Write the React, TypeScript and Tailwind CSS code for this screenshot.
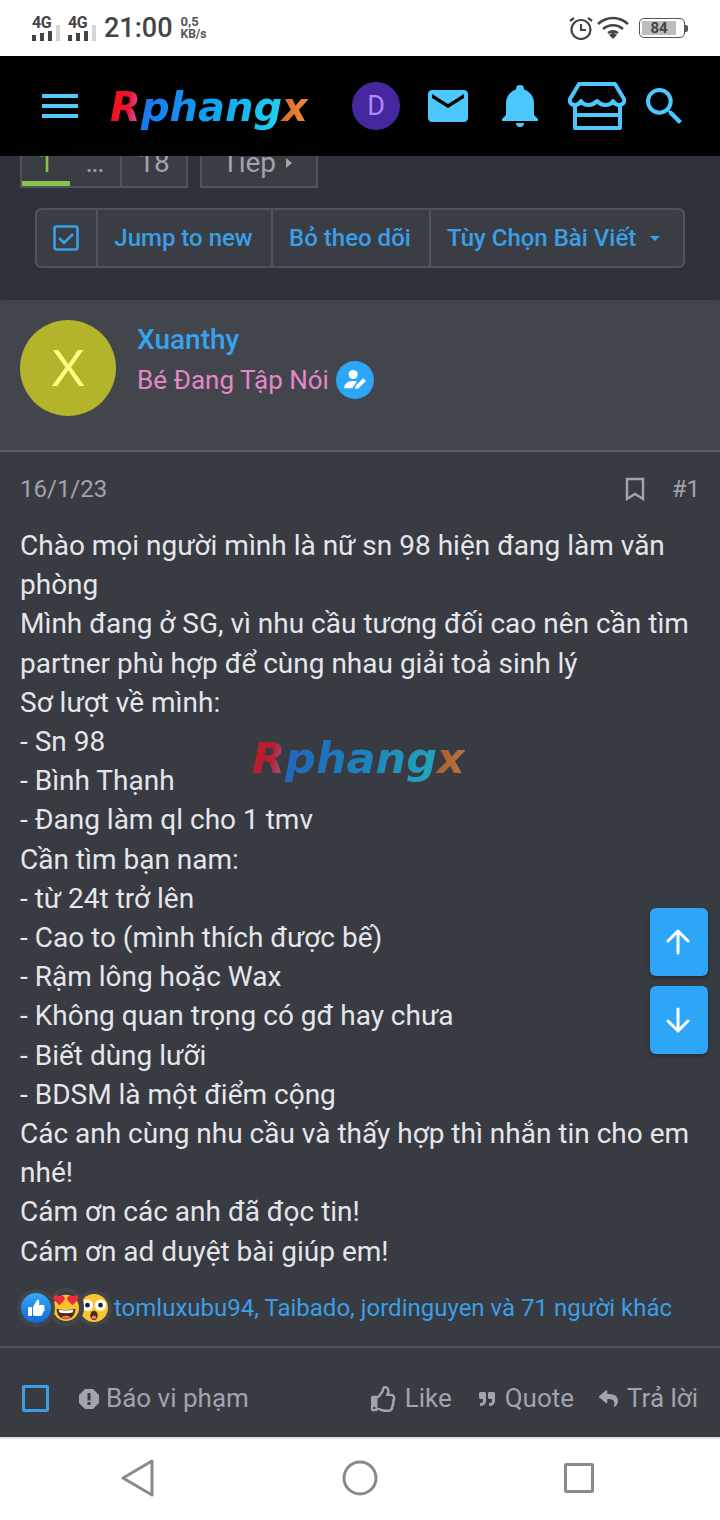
import { FaQuoteRight, FaReply, FaRegThumbsUp } from "react-icons/fa";

const lines = [
  "Chào mọi người mình là nữ sn 98 hiện đang làm văn",
  "phòng",
  "Mình đang ở SG, vì nhu cầu tương đối cao nên cần tìm",
  "partner phù hợp để cùng nhau giải toả sinh lý",
  "Sơ lượt về mình:",
  "- Sn 98",
  "- Bình Thạnh",
  "- Đang làm ql cho 1 tmv",
  "Cần tìm bạn nam:",
  "- từ 24t trở lên",
  "- Cao to (mình thích được bế)",
  "- Rậm lông hoặc Wax",
  "- Không quan trọng có gđ hay chưa",
  "- Biết dùng lưỡi",
  "- BDSM là một điểm cộng",
  "Các anh cùng nhu cầu và thấy hợp thì nhắn tin cho em",
  "nhé!",
  "Cám ơn các anh đã đọc tin!",
  "Cám ơn ad duyệt bài giúp em!",
];

function Signal() {
  return (
    <svg width="28" height="16" viewBox="0 0 28 16" className="block">
      <rect x="0" y="10" width="4" height="6" fill="#444" />
      <rect x="8" y="8" width="4" height="8" fill="#444" />
      <rect x="16" y="6" width="4" height="10" fill="#444" />
      <rect x="24" y="0" width="4" height="16" fill="#d6d6d6" />
    </svg>
  );
}

function Net() {
  return (
    <div className="flex flex-col items-start w-[28px] mt-[-1px]">
      <span className="text-[16px] leading-[16px] font-bold text-[#444] tracking-[-0.5px]">4G</span>
      <div className="mt-[-6px]"><Signal /></div>
    </div>
  );
}

function Logo({ className }: { className: string }) {
  return (
    <span
      className={
        "inline-block font-['DejaVu_Sans',sans-serif] font-bold italic bg-[linear-gradient(100deg,#f0101c_0%,#f0142a_11%,#d050a0_16%,#1a78f0_18%,#10a0f0_50%,#20d0f0_85%,#e0702a_87%,#f09040_100%)] bg-clip-text text-transparent " +
        className
      }
    >
      Rphangx
    </span>
  );
}

function StoreIcon() {
  return (
    <svg width="58" height="48" viewBox="0 0 58 48" fill="none" stroke="#4cc8ff" strokeWidth="4" strokeLinejoin="round" className="block">
      <path d="M11 2h36l9 15c1 4-2 6-5 6-3 0-5-2-6-4-1 2-4 4-8 4s-6-2-8-4c-2 2-4 4-8 4s-7-2-8-4c-1 2-3 4-6 4-3 0-6-2-5-6z" />
      <path d="M7 23v23h45V23M7 33h45" />
    </svg>
  );
}

function ReactLike() {
  return (
    <svg width="30" height="30" viewBox="0 0 30 30" className="block">
      <defs>
        <linearGradient id="lk" x1="0" y1="0" x2="0" y2="1">
          <stop offset="0" stopColor="#35a8f8" />
          <stop offset="1" stopColor="#1268d8" />
        </linearGradient>
      </defs>
      <circle cx="15" cy="15" r="15" fill="url(#lk)" />
      <rect x="7" y="14" width="4" height="9" rx="1" fill="#fff" />
      <path d="M12 14l4-7c2-1 3 1 2 5h4c2 0 2 2 1 3 1 1 1 3-1 4 0 2-1 3-2 4h-6c-1 0-2-1-2-1z" fill="#fff" />
    </svg>
  );
}

function ReactLove() {
  return (
    <svg width="28" height="30" viewBox="0 0 30 32" className="block">
      <circle cx="15" cy="17" r="14" fill="#fbc02d" />
      <path d="M5 18c6 2 14 2 20 0 0 7-4 11-10 11S5 25 5 18z" fill="#4a2a12" />
      <path d="M7 19c5 1 11 1 16 0l-1 3c-4 1-10 1-14 0z" fill="#fff" />
      <path d="M10 27c3-2 7-2 10 0-3 2-7 2-10 0z" fill="#f06a80" />
      <path d="M8 14L2 8c-2-3 2-7 6-3 4-3 7 1 5 4z" fill="#ee2b3a" />
      <path d="M22 14l6-6c2-3-2-7-6-3-4-3-7 1-5 4z" fill="#ee2b3a" />
    </svg>
  );
}

function ReactWow() {
  return (
    <svg width="28" height="28" viewBox="0 0 30 30" className="block">
      <circle cx="15" cy="15" r="15" fill="#fbc531" />
      <circle cx="8" cy="12" r="6" fill="#fff" />
      <circle cx="22" cy="12" r="6" fill="#fff" />
      <circle cx="8" cy="12" r="2.5" fill="#222" />
      <circle cx="22" cy="12" r="2.5" fill="#222" />
      <ellipse cx="15" cy="23" rx="4" ry="5" fill="#4a2a12" />
      <ellipse cx="15" cy="25" rx="2.5" ry="2" fill="#f06a80" />
    </svg>
  );
}

export default function App() {
  return (
    <div className="relative w-[720px] h-[1520px] overflow-hidden flex flex-col bg-[#383b42] font-['Roboto',sans-serif]">
      {/* status bar */}
      <div className="h-[56px] shrink-0 bg-white flex items-center pl-[32px] pr-[35px] text-[#444]">
        <Net />
        <div className="w-[8px]" />
        <Net />
        <span className="ml-[8px] text-[27px] font-medium leading-none">21:00</span>
        <div className="ml-[8px] flex flex-col text-[12px] leading-[13px] font-bold text-[#555]">
          <span className="text-[13px] leading-[12px]">0,5</span>
          <span>KB/s</span>
        </div>
        <div className="ml-auto flex items-center gap-[3px]">
          <svg width="24" height="24" viewBox="0 0 24 24" fill="none" stroke="#444" strokeWidth="2.2" className="block">
            <circle cx="12" cy="13.5" r="9.5" />
            <path d="M12 8v6h5" />
            <path d="M1 5l4-3M23 5l-4-3" />
          </svg>
          <svg width="34" height="24" viewBox="0 0 34 24" fill="none" stroke="#444" strokeWidth="2.6" className="block">
            <path d="M2 8c9-8 21-8 30 0M7 13c6-5 14-5 20 0M12 17c3-2 7-2 10 0" />
            <path d="M13 19l4-3 4 3-4 4z" fill="#444" stroke="none" />
          </svg>
          <div className="ml-[6px] relative w-[46px] h-[20px] border border-[#555] rounded-[5px] flex items-center pl-[2px]">
            <div className="w-[34px] h-[14px] bg-[#bdbdbd] flex items-center justify-center text-[15px] font-bold text-[#444]">84</div>
            <div className="absolute right-[-4px] top-[6px] w-[3px] h-[7px] bg-[#555] rounded-r-[2px]" />
          </div>
        </div>
      </div>

      {/* header */}
      <div className="relative z-10 h-[100px] shrink-0 bg-black flex items-center">
        <div className="ml-[42px] w-[36px] flex flex-col gap-[6px]">
          <div className="h-[4px] bg-[#54c8f6]" />
          <div className="h-[4px] bg-[#54c8f6]" />
          <div className="h-[4px] bg-[#54c8f6]" />
        </div>
        <div className="ml-[32px] w-[198px] flex justify-center mt-[2px]">
          <Logo className="text-[40px] leading-[50px]" />
        </div>
        <div className="ml-[44px] w-[48px] h-[48px] rounded-full bg-[#4527a0] text-[#b388ff] text-[27px] flex items-center justify-center">D</div>
        <svg width="40" height="32" viewBox="2 4 20 16" fill="#4cc8ff" className="block ml-[28px]">
          <path d="M20 4H4c-1.1 0-2 .9-2 2v12c0 1.1.9 2 2 2h16c1.1 0 2-.9 2-2V6c0-1.1-.9-2-2-2zm0 4l-8 5-8-5V6l8 5 8-5v2z" />
        </svg>
        <svg width="36" height="42" viewBox="3 2 18 21" fill="#4cc8ff" className="block ml-[34px]">
          <path d="M21,19V20H3V19L5,17V11C5,7.9 7.03,5.17 10,4.29C10,4.19 10,4.1 10,4A2,2 0 0,1 12,2A2,2 0 0,1 14,4C14,4.1 14,4.19 14,4.29C16.97,5.17 19,7.9 19,11V17L21,19M14,21A2,2 0 0,1 12,23A2,2 0 0,1 10,21" />
        </svg>
        <div className="ml-[30px]"><StoreIcon /></div>
        <svg width="36" height="36" viewBox="3 3 17.5 17.5" fill="#4cc8ff" className="block ml-[20px]">
          <path d="M9.5,3A6.5,6.5 0 0,1 16,9.5C16,11.11 15.41,12.59 14.44,13.73L14.71,14H15.5L20.5,19L19,20.5L14,15.5V14.71L13.73,14.44C12.59,15.41 11.11,16 9.5,16A6.5,6.5 0 0,1 3,9.5A6.5,6.5 0 0,1 9.5,3M9.5,5C7,5 5,7 5,9.5C5,12 7,14 9.5,14C12,14 14,12 14,9.5C14,7 12,5 9.5,5Z" />
        </svg>
      </div>

      {/* top zone */}
      <div className="h-[144px] shrink-0 bg-[#2f323a] overflow-hidden">
        <div className="flex gap-[12px] ml-[20px] mt-[-18px] h-[50px] text-[28px] leading-[45px] text-[#a0a4ad]">
          <div className="relative w-[168px] flex border-2 border-[#50535a] bg-[#3a3d44]">
            <div className="relative w-[98px] flex">
              <span className="w-[48px] text-center text-[#8bc34a]">1</span>
              <span className="w-[50px] text-center text-[20px] font-bold leading-[50px]">...</span>
              <div className="absolute left-0 bottom-0 w-[48px] h-[5px] bg-[#8bc34a]" />
            </div>
            <div className="flex-1 border-l-2 border-[#50535a] text-center">18</div>
          </div>
          <div className="w-[118px] border-2 border-[#50535a] bg-[#3a3d44] flex items-start pl-[20px]">
            <span>Tiếp</span>
            <span className="ml-[10px] mt-[18px] w-0 h-0 border-y-[5px] border-y-transparent border-l-[6px] border-l-[#a0a4ad]" />
          </div>
        </div>
        <div className="ml-[35px] mt-[20px] w-[650px] h-[60px] flex border-2 border-[#50535a] rounded-[6px] bg-[#3a3d44] text-[24px] font-medium text-[#3b9fe6]">
          <div className="w-[61px] flex items-center justify-center border-r-2 border-[#50535a] pr-[2px]">
            <svg width="26" height="26" viewBox="0 0 26 26" fill="none" stroke="#3b9fe6" strokeWidth="2.6" className="block">
              <rect x="1.5" y="1.5" width="23" height="23" rx="2" />
              <path d="M6 13l5 5 9-9" />
            </svg>
          </div>
          <div className="w-[175px] flex items-center justify-center border-r-2 border-[#50535a] pr-[2px]">Jump to new</div>
          <div className="w-[158px] flex items-center justify-center border-r-2 border-[#50535a] pr-[2px]">Bỏ theo dõi</div>
          <div className="flex-1 flex items-center pl-[16px]">
            <span>Tùy Chọn Bài Viết</span>
            <span className="ml-[14px] w-0 h-0 border-x-[5px] border-x-transparent border-t-[5px] border-t-[#3b9fe6]" />
          </div>
        </div>
      </div>

      {/* post head */}
      <div className="h-[152px] shrink-0 bg-[#42454c] border-b-2 border-[#595c62] rounded-t-[4px] flex pl-[20px] pt-[20px]">
        <div className="w-[96px] h-[96px] rounded-full bg-[#b2b42c] text-[#fbfc80] text-[52px] flex items-center justify-center font-['Liberation_Sans',sans-serif]">X</div>
        <div className="ml-[21px]">
          <div className="text-[28px] leading-[40px] font-medium text-[#36a3ee]">Xuanthy</div>
          <div className="flex items-center h-[40px] mt-[0px]">
            <span className="text-[26px] text-[#e587c9]">Bé Đang Tập Nói</span>
            <span className="ml-[7px] w-[38px] h-[38px] rounded-full bg-[#2ea6f7] flex items-center justify-center">
              <svg width="24" height="20" viewBox="0 0 26 22" fill="#fff" className="block">
                <circle cx="11" cy="5" r="5" />
                <path d="M1 20c0-5 4-8 10-8 2 0 3 0 4 1l-5 7z" />
                <path d="M13 21l1-4 8-8 3 3-8 8z" />
              </svg>
            </span>
          </div>
        </div>
      </div>

      {/* post meta */}
      <div className="h-[74px] shrink-0 flex items-center pl-[20px] pr-[20px] text-[24px] text-[#a0a4ad]">
        <span>16/1/23</span>
        <svg width="20" height="24" viewBox="0 0 20 24" fill="none" stroke="#a0a4ad" strokeWidth="2.4" className="block ml-auto">
          <path d="M2 2h16v20l-8-5-8 5z" />
        </svg>
        <span className="ml-[27px]">#1</span>
      </div>

      {/* post body */}
      <div className="relative h-[750px] shrink-0 pl-[20px] text-[28px] leading-[39.2px] text-[#e4e6ea]">
        {lines.map((l, i) => (
          <div key={i} className="whitespace-nowrap">{l}</div>
        ))}
        <div className="absolute left-[252px] top-[205px] opacity-70">
          <Logo className="text-[43px] leading-[54px]" />
        </div>
      </div>

      {/* reactions */}
      <div className="h-[72px] shrink-0 border-b-2 border-[#50535a] flex items-center pl-[21px] pb-[6px] relative">
        <div className="relative w-[93px] h-[30px]">
          <div className="absolute left-[59px] top-[1px] rounded-full ring-4 ring-[#42454c]"><ReactWow /></div>
          <div className="absolute left-[31px] top-[-1px] rounded-full ring-4 ring-[#42454c]"><ReactLove /></div>
          <div className="absolute left-0 top-0 rounded-full ring-4 ring-[#42454c]"><ReactLike /></div>
        </div>
        <span className="text-[24px] text-[#3b9fe6] whitespace-nowrap">tomluxubu94, Taibado, jordinguyen và 71 người khác</span>
      </div>

      {/* actions */}
      <div className="flex-1 flex items-center pl-[22px] pr-[22px] pt-[12px] text-[26px] text-[#a0a4ad]">
        <div className="w-[27px] h-[27px] border-[3px] border-[#3b9fe6] rounded-[2px]" />
        <svg width="20" height="20" viewBox="0 0 20 20" className="block ml-[30px]">
          <path d="M6 0h8l6 6v8l-6 6H6l-6-6V6z" fill="#a0a4ad" />
          <rect x="8.5" y="4" width="3" height="7.5" fill="#383b42" />
          <rect x="8.5" y="13" width="3" height="3" fill="#383b42" />
        </svg>
        <span className="ml-[7px]">Báo vi phạm</span>
        <FaRegThumbsUp className="ml-auto w-[26px] h-[26px]" />
        <span className="ml-[8px]">Like</span>
        <FaQuoteRight className="ml-[27px] w-[16px] h-[16px]" />
        <span className="ml-[10px]">Quote</span>
        <FaReply className="ml-[25px] w-[19px] h-[19px]" />
        <span className="ml-[9px]">Trả lời</span>
      </div>

      {/* android nav */}
      <div className="h-[83px] shrink-0 bg-white border-t-2 border-[#e4e4e4] flex items-center">
        <svg width="34" height="38" viewBox="0 0 34 38" fill="none" stroke="#8a8a8a" strokeWidth="3" strokeLinejoin="round" className="block ml-[121px] mb-[4px]">
          <path d="M31 2v34L2 19z" />
        </svg>
        <svg width="36" height="36" viewBox="0 0 36 36" fill="none" stroke="#8a8a8a" strokeWidth="3" className="block ml-[187px] mb-[4px]">
          <circle cx="18" cy="18" r="16" />
        </svg>
        <div className="ml-[186px] mb-[4px] w-[30px] h-[30px] border-[3px] border-[#8a8a8a] rounded-[2px]" />
      </div>

      {/* floating */}
      <div className="absolute left-[650px] top-[908px] flex flex-col gap-[10px] z-20">
        <div className="w-[58px] h-[68px] rounded-[6px] bg-[#2ea6f7] shadow-[0_2px_4px_rgba(0,0,0,0.3)] flex items-center justify-center pr-[2px]">
          <svg width="26" height="26" viewBox="0 0 26 26" fill="none" stroke="#fff" strokeWidth="3" strokeLinecap="round" strokeLinejoin="round" className="block">
            <path d="M13 24V2M3 12L13 2l10 10" />
          </svg>
        </div>
        <div className="w-[58px] h-[68px] rounded-[6px] bg-[#2ea6f7] shadow-[0_2px_4px_rgba(0,0,0,0.3)] flex items-center justify-center pr-[2px]">
          <svg width="26" height="26" viewBox="0 0 26 26" fill="none" stroke="#fff" strokeWidth="3" strokeLinecap="round" strokeLinejoin="round" className="block">
            <path d="M13 2v22M3 14l10 10 10-10" />
          </svg>
        </div>
      </div>
    </div>
  );
}
